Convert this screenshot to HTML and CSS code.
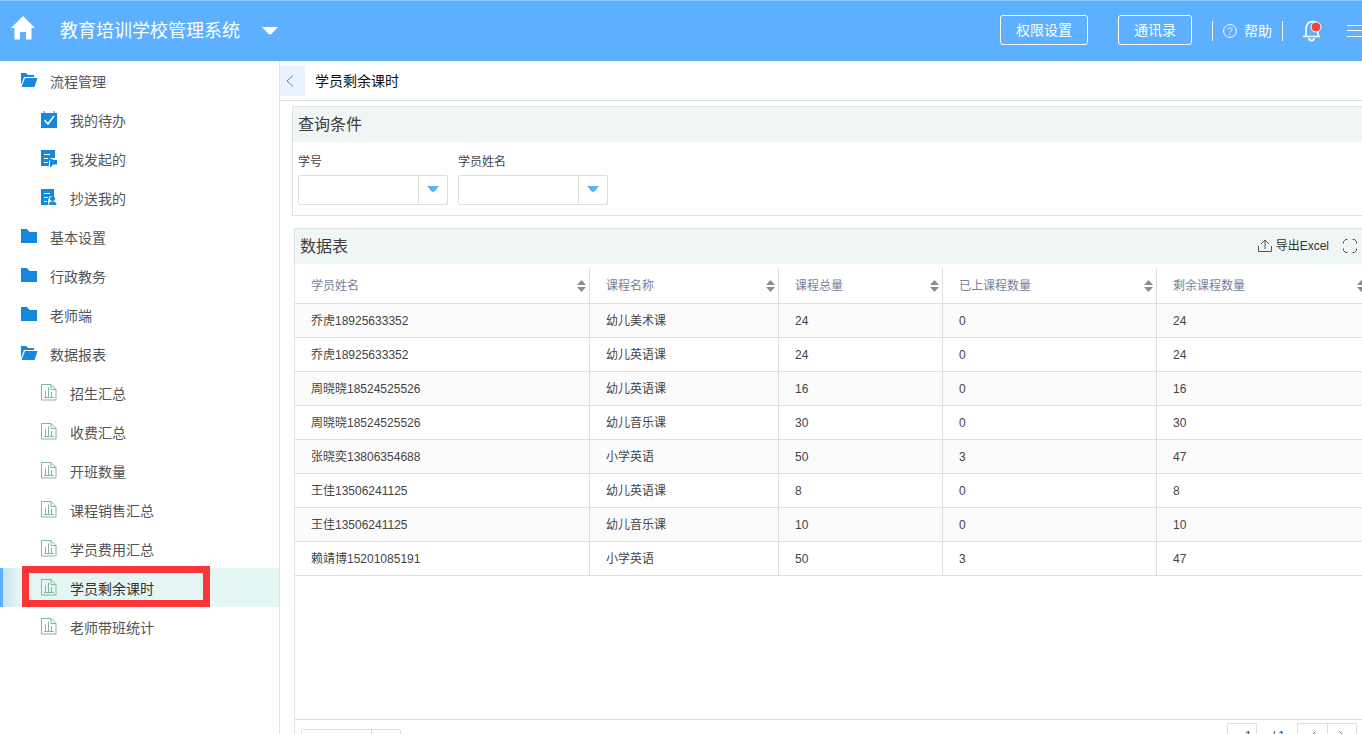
FILE: index.html
```html
<!DOCTYPE html>
<html lang="zh-CN">
<head>
<meta charset="utf-8">
<title>教育培训学校管理系统</title>
<link rel="stylesheet" href="styles.css">
</head>
<body>
<svg class="defs" aria-hidden="true">
  <symbol id="folder-open" viewBox="0 0 18 16"><path fill="#1688dc" d="M1 1h5l2 2h6v2H4L1 13z"/><path fill="#1688dc" d="M5 6h12.500l-3 9H1.500z"/></symbol>
  <symbol id="folder" viewBox="0 0 18 16"><path fill="#1688dc" d="M1 1h6l2.500 3H17v11H1z"/></symbol>
  <symbol id="todo" viewBox="0 0 18 18"><path fill="#1688dc" d="M1 3h2.500V1h1v2h9V1h1v2H17v15H1z"/><path fill="none" stroke="#fff" stroke-width="1.500" d="M4.500 10l3.500 4 6-8"/></symbol>
  <symbol id="sent" viewBox="0 0 18 18"><path fill="#1688dc" d="M1 1h14v8h-4l-2 3v5H1z"/><path stroke="#fff" d="M4 5.500h6M4 9.500h4M4 13.500h4"/><path fill="#1688dc" d="M10 10h2l1.500 1H17v4.500h-4L11 18h-1z"/></symbol>
  <symbol id="copied" viewBox="0 0 18 18"><path fill="#1688dc" d="M1 1h13v7h-4l-2 4v5H1z"/><path stroke="#fff" d="M4 5.500h6M4 9.500h4M4 13.500h3"/><circle cx="12.500" cy="10.500" r="2.500" fill="#1688dc"/><path fill="#1688dc" d="M8.500 17c0-5 8-5 8 0z"/></symbol>
  <symbol id="report" viewBox="0 0 18 18"><path fill="none" stroke="#82b89d" d="M1.500 1.500h9.500l5 5v10.500H1.500zM11 1.500v5h5M4 14.500h10M5.500 7.500v7M8.500 4.500v10M11.500 9v5.500"/></symbol>
  <symbol id="sort" viewBox="0 0 9 12"><path fill="#8c8c8c" d="M4.500 0L9 5H0zM0 7h9l-4.500 5z"/></symbol>
  <symbol id="caret" viewBox="0 0 12 6"><path fill="#5cb0ff" d="M0 0h12L8 5q-2 2-4 0z"/></symbol>
</svg>
<div class="page">
  <header class="topbar">
    <a class="home" href="#" aria-label="首页"><svg width="24" height="24" viewBox="0 0 24 24"><path fill="#fff" d="M12 0l12 12h-3.500v11.500H15V16H9v7.500H3.500V12H0z"/></svg></a>
    <button class="app-name" type="button">教育培训学校管理系统<svg width="16" height="8" viewBox="0 0 16 8"><path fill="#fff" d="M0 0h16L10 6.500q-2 2-4 0z"/></svg></button>
    <div class="tools">
      <button class="outline perm" type="button">权限设置</button>
      <button class="outline" type="button">通讯录</button>
      <a class="help" href="#"><svg width="14" height="14" viewBox="0 0 14 14" fill="none" stroke="#fff"><circle cx="7" cy="7" r="6.400"/><path d="M5 5.500c0-2.500 4-2.500 4 0C9 7 7 7 7 8.500M7 9.800v1.200"/></svg>帮助</a>
      <button class="plain bell" type="button" aria-label="通知"><svg width="20" height="22" viewBox="0 0 20 22"><path fill="none" stroke="#fff" stroke-width="1.700" d="M1 16.500h17M3.500 16C5 12 3 8 5 5c2-4.500 9-4.500 10 0 1.500 3 0 7 1.500 11M7 18c0 3.500 5 3.500 5 0"/><circle cx="14" cy="7" r="5" fill="#e34a43" stroke="#fff"/></svg></button>
      <button class="plain menu" type="button" aria-label="菜单"><svg width="17" height="12" viewBox="0 0 17 12"><path stroke="#fff" d="M0 .5h17M0 5.500h17M0 11.500h17"/></svg></button>
    </div>
  </header>
  <div class="body">
    <nav class="side">
      <a href="#"><svg><use href="#folder-open"/></svg>流程管理</a>
      <a class="sub" href="#"><svg><use href="#todo"/></svg>我的待办</a>
      <a class="sub" href="#"><svg><use href="#sent"/></svg>我发起的</a>
      <a class="sub" href="#"><svg><use href="#copied"/></svg>抄送我的</a>
      <a href="#"><svg><use href="#folder"/></svg>基本设置</a>
      <a href="#"><svg><use href="#folder"/></svg>行政教务</a>
      <a href="#"><svg><use href="#folder"/></svg>老师端</a>
      <a href="#"><svg><use href="#folder-open"/></svg>数据报表</a>
      <a class="sub" href="#"><svg><use href="#report"/></svg>招生汇总</a>
      <a class="sub" href="#"><svg><use href="#report"/></svg>收费汇总</a>
      <a class="sub" href="#"><svg><use href="#report"/></svg>开班数量</a>
      <a class="sub" href="#"><svg><use href="#report"/></svg>课程销售汇总</a>
      <a class="sub" href="#"><svg><use href="#report"/></svg>学员费用汇总</a>
      <a class="sub active" href="#" aria-current="page"><svg><use href="#report"/></svg>学员剩余课时</a>
      <a class="sub" href="#"><svg><use href="#report"/></svg>老师带班统计</a>
    </nav>
    <main class="main">
      <div class="crumb">
        <button class="back" type="button" aria-label="收起"><svg width="8" height="12" viewBox="0 0 8 12"><path fill="none" stroke="#5a82ad" d="M7 .5L1 6l6 5.500"/></svg></button>
        <h1>学员剩余课时</h1>
      </div>
      <section class="panel query">
        <h2 class="panel-head">查询条件</h2>
        <form class="fields">
          <div class="field"><label for="no">学号</label>
            <div class="combo"><input id="no" type="text"><button type="button" aria-label="选择学号"><svg width="12" height="6"><use href="#caret"/></svg></button></div></div>
          <div class="field"><label for="name">学员姓名</label>
            <div class="combo"><input id="name" type="text"><button type="button" aria-label="选择学员姓名"><svg width="12" height="6"><use href="#caret"/></svg></button></div></div>
        </form>
      </section>
      <section class="panel data">
        <div class="panel-head"><h2>数据表</h2>
          <div class="actions">
            <button class="plain" type="button"><svg width="14" height="14" viewBox="0 0 14 14" fill="none" stroke="#555"><path d="M.5 7v5.500h13V7M7 10V1.500M3 5l4-4 4 4"/></svg>导出Excel</button>
            <button class="plain" type="button" aria-label="全屏"><svg width="14" height="14" viewBox="0 0 14 14" fill="none" stroke="#555"><path d="M.5 4.500v-2l2-2h2M9.500.5h2l2 2v2M13.500 9.500v2l-2 2h-2M4.500 13.500h-2l-2-2v-2"/></svg></button>
          </div>
        </div>
        <div class="table-area">
        <table>
          <colgroup><col class="c1"><col class="c2"><col class="c3"><col class="c4"><col class="c5"></colgroup>
          <thead><tr>
            <th><div>学员姓名<svg><use href="#sort"/></svg></div></th>
            <th><div>课程名称<svg><use href="#sort"/></svg></div></th>
            <th><div>课程总量<svg><use href="#sort"/></svg></div></th>
            <th><div>已上课程数量<svg><use href="#sort"/></svg></div></th>
            <th><div>剩余课程数量<svg><use href="#sort"/></svg></div></th>
          </tr></thead>
          <tbody>
            <tr><td>乔虎18925633352</td><td>幼儿美术课</td><td>24</td><td>0</td><td>24</td></tr>
            <tr><td>乔虎18925633352</td><td>幼儿英语课</td><td>24</td><td>0</td><td>24</td></tr>
            <tr><td>周晓晓18524525526</td><td>幼儿英语课</td><td>16</td><td>0</td><td>16</td></tr>
            <tr><td>周晓晓18524525526</td><td>幼儿音乐课</td><td>30</td><td>0</td><td>30</td></tr>
            <tr><td>张晓奕13806354688</td><td>小学英语</td><td>50</td><td>3</td><td>47</td></tr>
            <tr><td>王佳13506241125</td><td>幼儿英语课</td><td>8</td><td>0</td><td>8</td></tr>
            <tr><td>王佳13506241125</td><td>幼儿音乐课</td><td>10</td><td>0</td><td>10</td></tr>
            <tr><td>赖靖博15201085191</td><td>小学英语</td><td>50</td><td>3</td><td>47</td></tr>
          </tbody>
        </table>
        </div>
        <footer class="pager">
          <div class="combo size"><input type="text" aria-label="每页条数"><button type="button" aria-label="选择每页条数"></button></div>
          <div class="pages">
            <input type="text" value="1" aria-label="页码"><span>/ 1</span>
            <div class="steps">
              <button type="button" aria-label="上一页"><svg width="6" height="10" viewBox="0 0 6 10"><path fill="none" stroke="#666" d="M5.500.5L1 5l4.500 4.500"/></svg></button><button type="button" aria-label="下一页"><svg width="6" height="10" viewBox="0 0 6 10"><path fill="none" stroke="#666" d="M.5.500L5 5 .5 9.500"/></svg></button>
            </div>
          </div>
        </footer>
      </section>
    </main>
  </div>
</div>
</body>
</html>
```
FILE: styles.css
```css
*, *::after { box-sizing: border-box; }
html, body { height: 100%; }
body {
  margin: 0;
  overflow: hidden;
  background: #fff;
  color: #444;
  font: 12px/18px "Liberation Sans", "Noto Sans CJK SC", sans-serif;
}
h1, h2 { margin: 0; font-weight: 400; }
a { color: inherit; text-decoration: none; }
button, input { font: inherit; color: inherit; margin: 0; padding: 0; }
svg { display: block; flex: none; }
.defs { position: absolute; width: 0; height: 0; }
.plain { display: flex; align-items: center; border: 0; background: none; }

/* The workspace runs slightly past the right and bottom window edges. */
.page {
  width: calc(100% + 8px);
  height: calc(100% + 24px);
  display: flex;
  flex-direction: column;
}

.topbar {
  flex: none;
  height: 61px;
  display: flex;
  align-items: center;
  padding: 0 6px 0 11px;
  border-top: 1px solid #8fcaff;
  background: #5cb0ff;
  color: #fff;
}
.home { margin-bottom: 6px; }
.app-name {
  display: flex;
  align-items: center;
  gap: 22px;
  margin-left: 25px;
  border: 0;
  background: none;
  font-size: 18px;
  line-height: 26px;
}
.tools { display: flex; align-items: center; margin-left: auto; font-size: 14px; }
.outline {
  height: 30px;
  margin-bottom: 2px;
  padding: 0 15px;
  border: 1px solid #fff;
  border-radius: 3px;
  background: none;
}
.perm { margin-right: 30px; }
.help {
  display: flex;
  align-items: center;
  gap: 7px;
  height: 20px;
  margin-left: 20px;
  padding: 0 10px;
  border: solid #fff;
  border-width: 0 1px;
}
.bell { margin-left: 19px; }
.menu { margin-left: 25px; }

.body { flex: 1; min-height: 0; display: flex; }
.side { flex: none; width: 280px; border-right: 1px solid #e0e3e3; font-size: 14px; color: #505558; }
.side a { position: relative; display: flex; align-items: center; gap: 12px; height: 39px; padding: 2px 0 0 20px; }
.side a svg { width: 18px; height: 16px; margin-bottom: 4px; }
.side .sub { padding-left: 40px; }
.side .sub svg { height: 18px; }
.side .active { background: linear-gradient(90deg, #5cb0ff 3px, #c9e4f0 3px, #e4f5f3 18px); color: #333; }
.side .active::after {
  content: "";
  position: absolute;
  left: 22px;
  top: -2px;
  width: 188px;
  height: 41px;
  border: 7px solid #fb3638;
}

.main { flex: 1; min-width: 0; display: flex; flex-direction: column; }
.crumb { flex: none; height: 40px; display: flex; align-items: center; gap: 10px; border-bottom: 1px solid #dfe1e1; }
.crumb h1 { font-size: 14px; line-height: 20px; color: #111; }
.back { width: 25px; height: 30px; padding-right: 5px; display: grid; place-items: center; border: 0; background: #e9f3ff; }

.panel { border: solid #dfe2e2; border-width: 1px 0 1px 1px; }
.panel-head { display: flex; align-items: center; justify-content: space-between; height: 35px; padding: 0 13px 0 5px; background: #f0f6f5; }
.panel h2 { font-size: 16px; line-height: 24px; color: #3c3c3c; }
.query { margin: 5px 0 0 12px; }
.fields { display: flex; gap: 10px; padding: 11px 5px 10px; }
.field { width: 150px; }
.field label { display: block; margin-bottom: 4px; }
.combo { display: flex; height: 30px; border: 1px solid #dcdfe0; border-radius: 2px; }
.combo input { flex: 1; min-width: 0; border: 0; background: none; }
.combo button { width: 29px; padding-bottom: 2px; display: grid; place-items: center; border: 0; border-left: 1px solid #dcdfe0; background: none; }

.data { flex: 1; min-height: 0; margin: 12px 0 0 14px; display: flex; flex-direction: column; }
.actions { display: flex; gap: 14px; }
.actions .plain { gap: 4px; padding-bottom: 2px; color: #333; }
.table-area { flex: 1; min-height: 0; padding-top: 4px; }
table { width: 100%; table-layout: fixed; border-collapse: separate; border-spacing: 0; }
.c1 { width: 295px; }
.c2 { width: 189px; }
.c3 { width: 164px; }
.c4 { width: 214px; }
.c5 { width: 213px; }
th, td { padding: 0 0 0 16px; border: solid #dde0e1; border-width: 0 1px 1px 0; text-align: left; font-weight: 400; }
th { height: 36px; padding-right: 3px; color: #74839b; }
th div { display: flex; align-items: center; justify-content: space-between; }
th svg { width: 9px; height: 12px; }
td { height: 34px; }
tbody tr:nth-child(odd) { background: #fbfbfb; }

.pager { flex: none; height: 38px; display: flex; align-items: flex-start; justify-content: space-between; padding: 3px 13px 0 6px; border-top: 1px solid #dcdfe0; }
.size { width: 100px; margin-top: 6px; }
.pages { display: flex; align-items: center; }
.pages > input { width: 30px; height: 26px; padding-right: 4px; border: 1px solid #dcdfe0; background: none; text-align: right; }
.pages span { margin: 0 12px 0 15px; }
.steps { display: flex; border: 1px solid #dcdfe0; }
.steps button { width: 29px; height: 24px; display: grid; place-items: center; border: 0; background: none; }
.steps button + button { border-left: 1px solid #dcdfe0; }
```
